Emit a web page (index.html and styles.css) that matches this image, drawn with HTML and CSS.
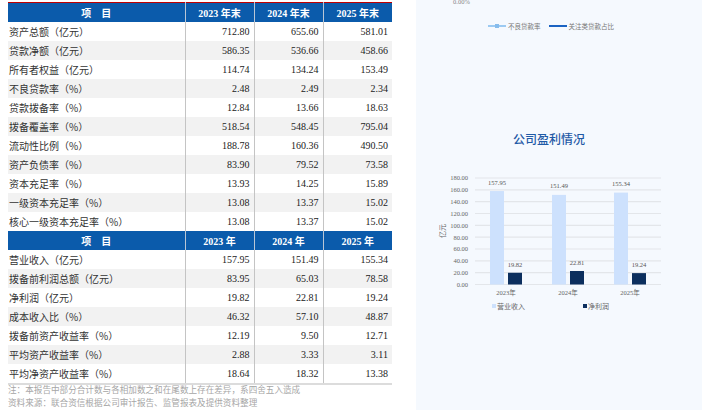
FILE: index.html
```html
<!DOCTYPE html>
<html lang="zh-CN">
<head>
<meta charset="utf-8">
<title>财务数据</title>
<link rel="stylesheet" href="styles.css">
</head>
<body>
<div class="page">
  <div class="left">
    <table class="fin">
      <colgroup><col class="c1"><col class="cn"><col class="cn"><col class="cn"></colgroup>
      <tr class="head"><th>项　目</th><th>2023 年末</th><th>2024 年末</th><th>2025 年末</th></tr>
      <tr><td>资产总额（亿元）</td><td>712.80</td><td>655.60</td><td>581.01</td></tr>
      <tr class="alt"><td>贷款净额（亿元）</td><td>586.35</td><td>536.66</td><td>458.66</td></tr>
      <tr><td>所有者权益（亿元）</td><td>114.74</td><td>134.24</td><td>153.49</td></tr>
      <tr class="alt"><td>不良贷款率（%）</td><td>2.48</td><td>2.49</td><td>2.34</td></tr>
      <tr><td>贷款拨备率（%）</td><td>12.84</td><td>13.66</td><td>18.63</td></tr>
      <tr class="alt"><td>拨备覆盖率（%）</td><td>518.54</td><td>548.45</td><td>795.04</td></tr>
      <tr><td>流动性比例（%）</td><td>188.78</td><td>160.36</td><td>490.50</td></tr>
      <tr class="alt"><td>资产负债率（%）</td><td>83.90</td><td>79.52</td><td>73.58</td></tr>
      <tr><td>资本充足率（%）</td><td>13.93</td><td>14.25</td><td>15.89</td></tr>
      <tr class="alt"><td>一级资本充足率（%）</td><td>13.08</td><td>13.37</td><td>15.02</td></tr>
      <tr><td>核心一级资本充足率（%）</td><td>13.08</td><td>13.37</td><td>15.02</td></tr>
      <tr class="head"><th>项　目</th><th>2023 年</th><th>2024 年</th><th>2025 年</th></tr>
      <tr><td>营业收入（亿元）</td><td>157.95</td><td>151.49</td><td>155.34</td></tr>
      <tr class="alt"><td>拨备前利润总额（亿元）</td><td>83.95</td><td>65.03</td><td>78.58</td></tr>
      <tr><td>净利润（亿元）</td><td>19.82</td><td>22.81</td><td>19.24</td></tr>
      <tr class="alt"><td>成本收入比（%）</td><td>46.32</td><td>57.10</td><td>48.87</td></tr>
      <tr><td>拨备前资产收益率（%）</td><td>12.19</td><td>9.50</td><td>12.71</td></tr>
      <tr class="alt"><td>平均资产收益率（%）</td><td>2.88</td><td>3.33</td><td>3.11</td></tr>
      <tr class="last"><td>平均净资产收益率（%）</td><td>18.64</td><td>18.32</td><td>13.38</td></tr>
    </table>
    <div class="notes">
      <p class="note">注：本报告中部分合计数与各相加数之和在尾数上存在差异，系四舍五入造成</p>
      <p class="note">资料来源：联合资信根据公司审计报告、监管报表及提供资料整理</p>
    </div>
  </div>
  <div class="panel">
    <div class="prev-axis">0.00%</div>
    <div class="prev-legend">
      <span class="lg-item"><span class="lg-line light"><i></i></span>不良贷款率</span>
      <span class="lg-item"><span class="lg-line dark"></span>关注类贷款占比</span>
    </div>
    <h3 class="chart-title">公司盈利情况</h3>
    <svg class="chart" width="286" height="145" viewBox="0 0 286 145">
      <g class="grid">
        <line x1="59" x2="245" y1="9" y2="9"/>
        <line x1="59" x2="245" y1="20.83" y2="20.83"/>
        <line x1="59" x2="245" y1="32.67" y2="32.67"/>
        <line x1="59" x2="245" y1="44.5" y2="44.5"/>
        <line x1="59" x2="245" y1="56.33" y2="56.33"/>
        <line x1="59" x2="245" y1="68.17" y2="68.17"/>
        <line x1="59" x2="245" y1="80" y2="80"/>
        <line x1="59" x2="245" y1="91.83" y2="91.83"/>
        <line x1="59" x2="245" y1="103.67" y2="103.67"/>
        <line x1="59" x2="245" y1="115.5" y2="115.5"/>
      </g>
      <g class="ylab">
        <text x="52" y="11.3">180.00</text>
        <text x="52" y="23.1">160.00</text>
        <text x="52" y="35">140.00</text>
        <text x="52" y="46.8">120.00</text>
        <text x="52" y="58.6">100.00</text>
        <text x="52" y="70.5">80.00</text>
        <text x="52" y="82.3">60.00</text>
        <text x="52" y="94.1">40.00</text>
        <text x="52" y="106">20.00</text>
        <text x="52" y="117.8">0.00</text>
      </g>
      <text class="ytitle" transform="translate(29 62) rotate(-90)">亿元</text>
      <g class="rev">
        <rect x="74" y="22.05" width="14" height="93.45"/>
        <rect x="136" y="25.9" width="14" height="89.6"/>
        <rect x="198" y="23.6" width="14" height="91.9"/>
      </g>
      <g class="net">
        <rect x="92" y="103.77" width="14" height="11.73"/>
        <rect x="154" y="102" width="14" height="13.5"/>
        <rect x="216" y="104.12" width="14" height="11.38"/>
      </g>
      <g class="vlab">
        <text x="81" y="15.5">157.95</text>
        <text x="143" y="19.4">151.49</text>
        <text x="205" y="17.1">155.34</text>
        <text x="99" y="97.5">19.82</text>
        <text x="161" y="95.8">22.81</text>
        <text x="223" y="98">19.24</text>
      </g>
      <g class="xlab">
        <text x="90" y="126">2023年</text>
        <text x="152" y="126">2024年</text>
        <text x="214" y="126">2025年</text>
      </g>
      <g class="legend">
        <rect class="rev-sq" x="76" y="135" width="4" height="4"/>
        <text x="81" y="139.5">营业收入</text>
        <rect class="net-sq" x="167" y="135" width="4" height="4"/>
        <text x="172" y="139.5">净利润</text>
      </g>
    </svg>
  </div>
</div>
</body>
</html>
```

FILE: styles.css
```css
html, body {
  margin: 0;
  padding: 0;
  background: #ffffff;
}

.page {
  display: flex;
  width: 702px;
  height: 410px;
  overflow: hidden;
}

.left {
  width: 384px;
  margin-left: 8px;
  padding-top: 2px;
}

.fin {
  border-collapse: collapse;
  width: 384px;
  table-layout: fixed;
  border-top: 1px solid #c00000;
  font-family: "Liberation Serif", "Noto Sans CJK SC", serif;
  font-size: 10px;
  color: #222;
}

.fin col.c1 { width: 177px; }
.fin col.cn { width: 69px; }

.fin tr { height: 19px; }

.fin th {
  background: #0b5bab;
  color: #fff;
  font-weight: bold;
  text-align: center;
  padding: 0;
  border-left: 1px solid #b9c6d6;
}
.fin th:first-child { border-left: none; }

.fin td {
  padding: 0 4px 0 1px;
  text-align: right;
  border-left: 1px solid #c4c4c4;
  line-height: 19px;
  white-space: nowrap;
}

.fin td:first-child {
  text-align: left;
  border-left: none;
  font-family: "Noto Sans CJK SC", sans-serif;
  color: #333;
}

.fin tr.alt td { background: #f2f2f2; }

.fin tr.last td { border-bottom: 2px solid #dcdcdc; }

.notes {
  margin-top: -2px;
}

.note {
  margin: 0;
  font-family: "Noto Sans CJK SC", sans-serif;
  font-size: 8.6px;
  line-height: 13px;
  color: #a6a6a6;
}

.panel {
  width: 286px;
  height: 410px;
  margin-left: 24px;
  background: #f5f9fe;
  display: flex;
  flex-direction: column;
}

.prev-axis {
  margin-top: -2px;
  margin-left: 37px;
  font-family: "Liberation Serif", serif;
  font-size: 6.5px;
  line-height: 7px;
  color: #888;
  height: 7px;
}

.prev-legend {
  display: flex;
  gap: 8px;
  margin-top: 17px;
  margin-left: 72px;
  font-family: "Noto Sans CJK SC", sans-serif;
  font-size: 6.5px;
  line-height: 8px;
  color: #777;
}

.lg-item {
  display: flex;
  align-items: center;
}

.lg-line {
  display: inline-block;
  width: 18px;
  height: 2px;
  margin-right: 2px;
  position: relative;
}
.lg-line.light { background: #9ccaf2; }
.lg-line.light i {
  position: absolute;
  left: 7px;
  top: -1px;
  width: 4px;
  height: 4px;
  background: #86bcec;
}
.lg-line.dark { background: #1b63c2; }

.chart-title {
  margin: 102px 0 0 97px;
  font-family: "Noto Sans CJK SC", sans-serif;
  font-weight: 500;
  font-size: 12px;
  line-height: 14px;
  color: #1f5aa6;
  height: 14px;
}

.chart {
  display: block;
  margin-top: 23px;
}

.grid line {
  stroke: #e3e6ea;
  stroke-width: 1.2;
}

.ylab text {
  font-family: "Liberation Serif", serif;
  font-size: 6.5px;
  fill: #666;
  text-anchor: end;
}

.ytitle {
  font-family: "Noto Sans CJK SC", sans-serif;
  font-size: 7px;
  fill: #666;
  text-anchor: middle;
}

.rev rect { fill: #cde1fd; }
.net rect { fill: #0c2f5e; }

.vlab text {
  font-family: "Liberation Serif", serif;
  font-size: 6.5px;
  fill: #555;
  text-anchor: middle;
}

.xlab text {
  font-family: "Liberation Serif", "Noto Sans CJK SC", serif;
  font-size: 6.5px;
  fill: #666;
  text-anchor: middle;
}

.legend text {
  font-family: "Noto Sans CJK SC", sans-serif;
  font-size: 7px;
  fill: #666;
}
.legend .rev-sq { fill: #cde1fd; }
.legend .net-sq { fill: #0c2f5e; }
```
